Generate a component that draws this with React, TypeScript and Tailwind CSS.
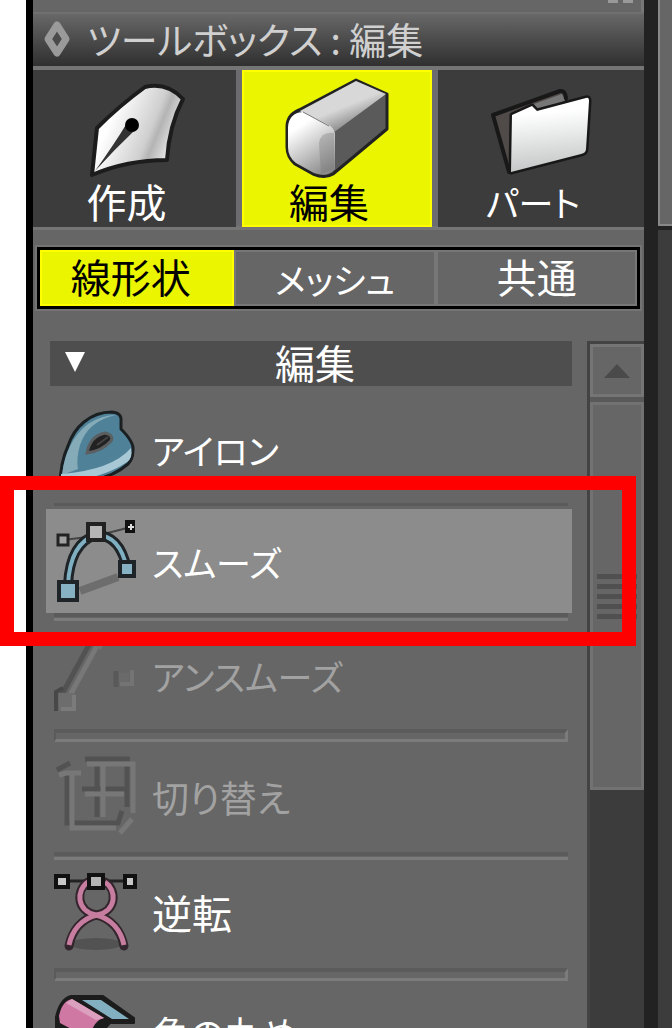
import type { ReactNode } from "react";

type Tool = {
  name: string;
  icon: ReactNode;
  height: string;
  size: string;
  divider: "thin" | "wide" | "bare";
  disabled?: boolean;
  selected?: boolean;
};

const KANA = "text-[35px]";
const KANJI = "text-[40px] pb-1";
const MIXED = "text-[37px]";

function PenIcon() {
  return (
    <svg width="104" height="104" viewBox="-6 -4 104 104" aria-hidden="true">
      <defs>
        <linearGradient id="pen" x1="0" y1="0.3" x2="1" y2="0.7">
          <stop offset="0.2" stopColor="#ffffff" />
          <stop offset="0.62" stopColor="#cfcfcf" />
          <stop offset="0.7" stopColor="#b4b4b4" />
          <stop offset="0.85" stopColor="#dedede" />
        </linearGradient>
      </defs>
      <path
        d="M3 94 L8 47 Q30 25 56 6 Q78 1 94 18 Q80 45 78 79 Q38 79 3 94Z"
        fill="url(#pen)"
        stroke="#1c1c1c"
        strokeWidth="4"
        strokeLinejoin="round"
      />
      <path d="M6 90 Q26 62 38 42 L46 49 Q26 68 6 90Z" fill="#333" />
      <circle cx="43" cy="44" r="7" fill="#000" />
    </svg>
  );
}

function EraserIcon() {
  return (
    <svg width="108" height="104" viewBox="0 0 108 104" aria-hidden="true">
      <defs>
        <linearGradient id="front" x1="0.2" y1="0" x2="0.7" y2="1">
          <stop offset="0.2" stopColor="#ffffff" />
          <stop offset="1" stopColor="#8c8c8c" />
        </linearGradient>
        <linearGradient id="top" x1="0.3" y1="0.2" x2="0.7" y2="0.8">
          <stop offset="0.5" stopColor="#d8d8d8" />
          <stop offset="1" stopColor="#8a8a8a" />
        </linearGradient>
      </defs>
      <path
        d="M4 50 Q4 38 16 33 L73 3 L104 17 V52 L50 97 Q42 102 30 97 L12 87 Q4 80 4 70Z"
        fill="#5a5a5a"
        stroke="#222"
        strokeWidth="3"
        strokeLinejoin="round"
      />
      <path d="M17 34 L73 4 L103 17 L50 56Z" fill="url(#top)" />
      <path
        d="M5 50 Q6 36 20 35 L44 47 Q53 51 52 60 V92 Q44 101 31 96 L13 86 Q5 80 5 70Z"
        fill="url(#front)"
      />
      <path d="M20 35 L46 49" stroke="#777" strokeWidth="1" />
      <path d="M36 66 Q38 54 51 56 V92 L38 97Z" fill="#777" opacity="0.35" />
    </svg>
  );
}

function FolderIcon() {
  return (
    <svg width="104" height="104" viewBox="0 -9 104 104" aria-hidden="true">
      <defs>
        <linearGradient id="folder" x1="0.4" y1="0" x2="0.5" y2="1">
          <stop offset="0.2" stopColor="#ffffff" />
          <stop offset="1" stopColor="#c2c5c5" />
        </linearGradient>
      </defs>
      <path
        d="M4 29 L71 5 Q76 4 77 12 L60 60 L20 86Z"
        fill="#504a48"
        stroke="#181818"
        strokeWidth="4"
        strokeLinejoin="round"
      />
      <path d="M45 18 L73 8 L76 15 L48 25Z" fill="#777" />
      <path
        d="M23 29 L43 20 L48 25 L97 12 Q100 11 100 15 L97 63 Q97 67 92 68 L22 86Z"
        fill="none"
        stroke="#181818"
        strokeWidth="5"
        strokeLinejoin="round"
      />
      <path
        d="M23 29 L43 20 L48 25 L97 12 Q100 11 100 15 L97 63 Q97 67 92 68 L22 86Z"
        fill="url(#folder)"
      />
    </svg>
  );
}

function ToolSvg({ children }: { children: ReactNode }) {
  return (
    <svg
      width="84"
      height="84"
      viewBox="0 0 84 84"
      fill="none"
      className="shrink-0"
      aria-hidden="true"
    >
      {children}
    </svg>
  );
}

const ironIcon = (
  <ToolSvg>
    <path
      d="M6 80 Q6 56 14 39 Q19 24 30 15 Q42 5 58 5 Q68 6 67 14 V22 Q80 35 79 43 Q79 52 74 57 Q60 69 40 73 Q20 77 6 80Z"
      fill="#4f8299"
      stroke="#1a1f22"
      strokeWidth="3"
      strokeLinejoin="round"
    />
    <path d="M8 68 Q12 34 34 17 Q48 8 62 8 Q34 14 26 38 Q22 52 24 62Z" fill="#86abb8" />
    <path d="M7 67 Q58 63 77 41 Q79 51 73 55 Q50 71 7 76Z" fill="#a9c8d6" />
    <path
      d="M33 46 Q36 29 51 26 Q60 28 57 34 Q48 44 33 46Z"
      fill="#222"
      stroke="#5b5f61"
      strokeWidth="3"
    />
    <path d="M43 38 L54 30" stroke="#444" strokeWidth="2" />
  </ToolSvg>
);

const smoothIcon = (
  <ToolSvg>
    <path d="M26 72 L64 58" stroke="#6d6d6d" strokeWidth="8" />
    <path d="M9 21 L42 17 L77 8" stroke="#444" strokeWidth="2" />
    <path d="M14 66 Q16 24 42 16 Q66 16 73 50" stroke="#1e2427" strokeWidth="10" />
    <path d="M14 66 Q16 24 42 16 Q66 16 73 50" stroke="#7fb0c2" strokeWidth="4" />
    <rect x="4" y="16" width="10" height="10" fill="#a0a0a0" stroke="#222" strokeWidth="3" />
    <rect x="34" y="5" width="16" height="16" fill="#b5b5b5" stroke="#222" strokeWidth="4" />
    <rect x="71" y="1" width="10" height="13" fill="#111" />
    <path d="M77 5 V11 M74 8 H80" stroke="#ddd" strokeWidth="2" />
    <rect x="5" y="63" width="18" height="18" fill="#86b2c4" stroke="#1e2427" strokeWidth="4" />
    <rect x="66" y="43" width="14" height="14" fill="#86b2c4" stroke="#1e2427" strokeWidth="4" />
  </ToolSvg>
);

const unsmoothIcon = (
  <ToolSvg>
    <path d="M7 63 L36 10" stroke="#525252" strokeWidth="5" />
    <path d="M14 66 L43 13" stroke="#787878" strokeWidth="5" />
    <path d="M34 6 L46 14 L50 5" stroke="#747474" strokeWidth="4" />
    <path d="M2 78 V59 L9 55" stroke="#484848" strokeWidth="4" />
    <rect x="5" y="60" width="16" height="18" fill="#6d6d6d" />
    <path d="M7 76 H20 V62" stroke="#7b7b7b" strokeWidth="4" />
    <path d="M62 38 V54" stroke="#595959" strokeWidth="5" />
    <path d="M66 51 H78 V37" stroke="#747474" strokeWidth="4" />
    <rect x="65" y="40" width="10" height="9" fill="#6a6a6a" />
  </ToolSvg>
);

const switchIcon = (
  <ToolSvg>
    <g stroke="#525252" strokeWidth="5">
      <path d="M3 15 L16 8" />
      <path d="M13 16 V68 H64 L68 56" />
      <path d="M31 4 H76 M43 8 V62 M28 34 H72 M73 10 V52" />
    </g>
    <g stroke="#777" strokeWidth="5">
      <path d="M5 20 L12 18 H27" />
      <path d="M18 20 V73 H62 M66 78 L78 64" />
      <path d="M33 9 H79 V58 M49 10 V62 M31 39 H70" />
    </g>
  </ToolSvg>
);

const reverseIcon = (
  <ToolSvg>
    <ellipse cx="42" cy="74" rx="26" ry="6" fill="#4a4a4a" opacity="0.7" />
    <path d="M9 11 H76" stroke="#222" strokeWidth="3" />
    <g stroke="#33262d" strokeWidth="9" strokeLinecap="round">
      <path d="M34 12 C22 20 22 41 42 45 C58 49 67 61 70 76" />
      <path d="M51 12 C63 20 63 41 43 45 C27 49 18 61 15 76" />
    </g>
    <g stroke="#c67da0" strokeWidth="5">
      <path d="M51 12 C63 20 63 41 43 45 C27 49 18 61 15 75" />
      <path d="M34 12 C22 20 22 41 42 45 C58 49 67 61 70 75" />
    </g>
    <rect x="2" y="6" width="12" height="11" fill="#c8c8c8" stroke="#111" strokeWidth="4" />
    <rect x="35" y="5" width="14" height="13" fill="#b5b5b5" stroke="#111" strokeWidth="4" />
    <rect x="71" y="6" width="10" height="11" fill="#c8c8c8" stroke="#111" strokeWidth="4" />
  </ToolSvg>
);

const cornerIcon = (
  <ToolSvg>
    <path
      d="M2 50 V26 Q6 8 17 5 H49 L80 27 V32 H56 L40 50Z"
      fill="#1c1c1c"
      stroke="#1c1c1c"
      strokeWidth="2"
      strokeLinejoin="round"
    />
    <path d="M5 25 Q8 10 18 8 L50 27 Q38 30 36 48 L6 32Z" fill="#cf78a4" />
    <path d="M18 8 L50 27 L42 29 L12 12Z" fill="#dca0bf" />
    <path d="M28 9 H47 L75 28 H58Z" fill="#83b0c0" />
  </ToolSvg>
);

const tools: Tool[] = [
  { name: "アイロン", icon: ironIcon, height: "h-[108px]", size: KANA, divider: "bare" },
  {
    name: "スムーズ",
    icon: smoothIcon,
    height: "h-[104px]",
    size: KANA,
    divider: "thin",
    selected: true,
  },
  {
    name: "アンスムーズ",
    icon: unsmoothIcon,
    height: "h-[108px]",
    size: KANA,
    divider: "wide",
    disabled: true,
  },
  {
    name: "切り替え",
    icon: switchIcon,
    height: "h-[110px]",
    size: MIXED,
    divider: "thin",
    disabled: true,
  },
  { name: "逆転", icon: reverseIcon, height: "h-[108px]", size: KANJI, divider: "wide" },
  { name: "角の丸め", icon: cornerIcon, height: "h-[104px]", size: MIXED, divider: "bare" },
];

const categories = [
  { name: "作成", icon: <PenIcon />, size: KANJI },
  { name: "編集", icon: <EraserIcon />, size: KANJI, active: true },
  { name: "パート", icon: <FolderIcon />, size: KANA },
];

const modes = [
  { name: "線形状", size: KANJI, active: true },
  { name: "メッシュ", size: KANA },
  { name: "共通", size: KANJI },
];

function Divider({ kind }: { kind: Tool["divider"] }) {
  if (kind === "bare") {
    return <div className="ml-2 mr-1 h-[6px] border-t-3 border-[#5b5b5b]" />;
  }
  if (kind === "wide") {
    return (
      <div className="ml-2 mr-1 h-[13px] border-t-4 border-r-3 border-b-3 border-l-2 border-t-[#5b5b5b] border-r-[#7b7b7b] border-b-[#7b7b7b] border-l-[#5b5b5b]" />
    );
  }
  return <div className="ml-2 mr-1 h-[8px] border-t-4 border-b-3 border-t-[#5b5b5b] border-b-[#7b7b7b]" />;
}

function ToolRow({ tool }: { tool: Tool }) {
  return (
    <li>
      <div className={`relative ${tool.height}`}>
        <button
          type="button"
          disabled={tool.disabled}
          className={`flex h-full w-full items-center gap-[14px] pl-2 text-left leading-none whitespace-nowrap ${tool.size} ${
            tool.selected ? "bg-[#8c8c8c]" : ""
          } ${tool.disabled ? "text-[#a2a2a2]" : "text-white"}`}
        >
          {tool.icon}
          {tool.name}
        </button>
        {tool.selected && (
          <div className="pointer-events-none absolute -top-[33px] -right-[64px] -bottom-[33px] -left-[46px] z-10 border-14 border-[#ff0000]" />
        )}
      </div>
      <Divider kind={tool.divider} />
    </li>
  );
}

function ScrollBar() {
  return (
    <div className="flex w-[57px] shrink-0 flex-col border-t-3 border-l-3 border-[#434343] bg-[#3c3c3c]">
      <button
        type="button"
        aria-label="上へスクロール"
        className="flex h-[53px] items-center justify-center border-3 border-[#757575] bg-[#666]"
      >
        <svg width="26" height="14" viewBox="0 0 26 14" aria-hidden="true">
          <path d="M0 14 L13 0 L26 14Z" fill="#4a4a4a" />
        </svg>
      </button>
      <div className="h-[5px] bg-[#595959]" />
      <div className="flex h-[388px] flex-col justify-center gap-[5px] border-3 border-[#727272] bg-[#666] px-1">
        {[0, 1, 2, 3, 4].map((n) => (
          <div key={n} className="h-[5px] bg-[#505050]" />
        ))}
      </div>
    </div>
  );
}

export default function App() {
  return (
    <div className="flex h-screen overflow-hidden bg-white pl-[26px] font-['Noto_Sans_CJK_JP',sans-serif] [font-feature-settings:'palt']">
      <div className="flex min-w-0 flex-1 flex-col border-l-7 border-black bg-[#666]">
        <div className="flex h-[12px] shrink-0 justify-end gap-[5px] border-r-3 border-[#777] pr-[8px]">
          <div className="h-[3px] w-[10px] bg-[#999]" />
          <div className="h-[3px] w-[10px] bg-[#999]" />
        </div>
        <header className="flex h-[54px] shrink-0 items-center gap-4 border-t-2 border-[#707070] bg-linear-to-b from-[#686868] to-[#303030] pb-[2px] pl-[10px]">
          <svg width="28" height="38" viewBox="0 0 28 38" className="shrink-0" aria-hidden="true">
            <path
              d="M14 5 L23 19 L14 33 L5 19Z"
              fill="#4a4a4a"
              stroke="#9a9a9a"
              strokeWidth="7"
              strokeLinejoin="round"
            />
          </svg>
          <h1 className="text-[37px] leading-none whitespace-nowrap text-[#d0d0d0]">
            ツールボックス : 編集
          </h1>
        </header>

        <nav className="grid h-[164px] shrink-0 grid-cols-[203fr_190fr_206fr] gap-[6px] border-y-4 border-[#757575] bg-[#6c6c70]">
          {categories.map((c) => (
            <button
              key={c.name}
              type="button"
              className={`flex flex-col items-center leading-none ${c.size} ${
                c.active
                  ? "border-2 border-[#ffff00] bg-[#ebf500] pt-[5px] text-black"
                  : "bg-[#3c3c3c] pt-[7px] text-white"
              }`}
            >
              {c.icon}
              <span className="flex h-10 items-center pr-4">{c.name}</span>
            </button>
          ))}
        </nav>

        <div className="mx-1 mt-[17px] grid h-[62px] shrink-0 grid-cols-[194fr_203fr_201fr] border-3 border-black outline-2 outline-[#747474]">
          {modes.map((m) => (
            <button
              key={m.name}
              type="button"
              className={`flex items-center justify-center border-2 leading-none ${m.size} ${
                m.active
                  ? "border-[#ffff00] bg-[#ebf500] pr-3 text-black"
                  : "border-[#777] bg-[#666] text-white"
              }`}
            >
              {m.name}
            </button>
          ))}
        </div>

        <div className="mt-8 flex min-h-0 flex-1">
          <section className="min-w-0 flex-1 pr-[15px] pl-[13px]">
            <h2 className="ml-1 h-[45px] bg-[#4e4e4e]">
              <button
                type="button"
                className="flex h-full w-full items-center pb-1 pl-[14px] text-[40px] leading-none text-white"
              >
                <svg width="22" height="22" viewBox="0 0 22 22" aria-hidden="true">
                  <path d="M1 1 H21 L11 21Z" fill="#fff" />
                </svg>
                <span className="flex-1 pr-[28px] text-center">編集</span>
              </button>
            </h2>
            <ul className="pt-[9px]">
              {tools.map((tool) => (
                <ToolRow key={tool.name} tool={tool} />
              ))}
            </ul>
          </section>
          <ScrollBar />
        </div>
      </div>

      <div className="w-[14px] shrink-0 bg-[#222]" />
      <div className="flex w-[14px] shrink-0 flex-col bg-[#3c3c3c]">
        <div className="h-[230px] border-b-4 border-b-[#222] bg-[#666]">
          <div className="h-full border-b-2 border-l-2 border-[#888]" />
        </div>
      </div>
    </div>
  );
}
